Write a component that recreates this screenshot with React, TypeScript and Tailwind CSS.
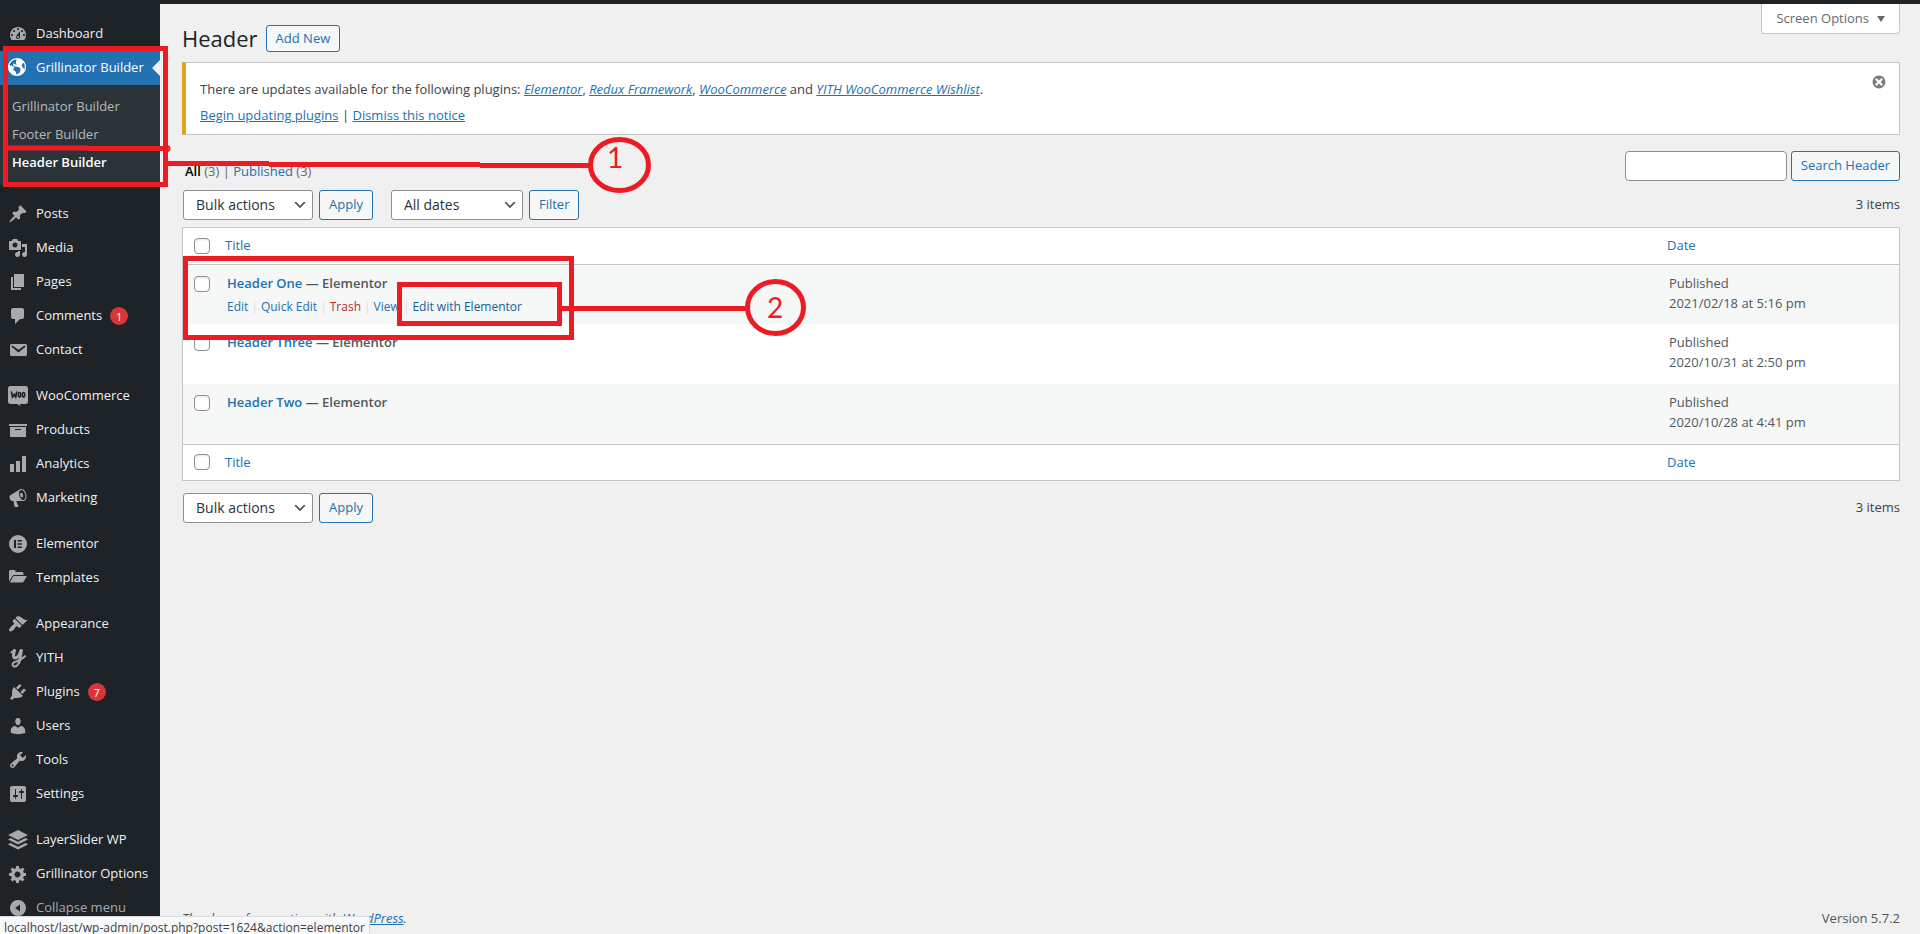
import type { ReactNode } from 'react';

const dash = {
  dashboard:
    'M3.76 16h12.48c1.1-1.37 1.76-3.11 1.76-5 0-4.42-3.58-8-8-8s-8 3.58-8 8c0 1.89.66 3.63 1.76 5zM10 4c.55 0 1 .45 1 1s-.45 1-1 1-1-.45-1-1 .45-1 1-1zM6 6c.55 0 1 .45 1 1s-.45 1-1 1-1-.45-1-1 .45-1 1-1zm8 0c.55 0 1 .45 1 1s-.45 1-1 1-1-.45-1-1 .45-1 1-1zm-5.37 5.55L12 7v6c0 1.1-.9 2-2 2s-2-.9-2-2c0-.57.24-1.08.63-1.45zM4 10c.55 0 1 .45 1 1s-.45 1-1 1-1-.45-1-1 .45-1 1-1zm12 0c.55 0 1 .45 1 1s-.45 1-1 1-1-.45-1-1 .45-1 1-1zm-5 3c0-.55-.45-1-1-1s-1 .45-1 1 .45 1 1 1 1-.45 1-1z',
  site: 'M9 0C4.03 0 0 4.03 0 9s4.03 9 9 9 9-4.03 9-9-4.03-9-9-9zm3.46 11.95c0 1.47-.8 3.3-4.06 4.7.3-4.17-2.52-3.69-3.2-5 .126-1.1.804-2.063 1.8-2.55-1.552-.266-3-.96-4.18-2 .05.47.28.904.64 1.21-.782-.295-1.458-.817-1.94-1.5.977-3.225 3.883-5.482 7.25-5.63-.84 1.38-1.5 4.13 0 5.57C7.23 7 6.26 5 5.41 5.79c-1.13 1.06.33 2.51 3.42 3.08 3.29.59 3.66 1.58 3.63 3.08zm1.34-4c-.32-1.11.62-2.23 1.69-3.14 1.356 1.955 1.67 4.45.84 6.68-.77-1.89-2.17-2.32-2.53-3.57v.03z',
  post: 'M10.44 3.02l1.82-1.82 6.36 6.35-1.83 1.82c-1.05-.68-2.48-.57-3.41.36l-.75.75c-.92.93-1.04 2.35-.35 3.41l-1.83 1.82-2.41-2.41-2.8 2.79c-.42.42-3.38 2.71-3.8 2.29s1.86-3.39 2.28-3.81l2.79-2.79L4.1 9.36l1.83-1.82c1.05.69 2.48.57 3.4-.36l.75-.75c.93-.92 1.05-2.35.36-3.41z',
  media:
    'M13 11V4c0-.55-.45-1-1-1h-1.67L9 1H5L3.67 3H2c-.55 0-1 .45-1 1v7c0 .55.45 1 1 1h10c.55 0 1-.45 1-1zM7 4.5c1.38 0 2.5 1.12 2.5 2.5S8.38 9.5 7 9.5 4.5 8.38 4.5 7 5.62 4.5 7 4.5zM14 6h5v10.5c0 1.38-1.12 2.5-2.5 2.5S14 17.88 14 16.5s1.12-2.5 2.5-2.5c.17 0 .34.02.5.05V9h-3V6zm-4 8.05V13h2v3.5c0 1.38-1.12 2.5-2.5 2.5S7 17.88 7 16.5 8.12 14 9.5 14c.17 0 .34.02.5.05z',
  page: 'M6 15V2h10v13H6zm-1 1h8v2H3V5h2v11z',
  comments:
    'M5 2h9c1.1 0 2 .9 2 2v7c0 1.1-.9 2-2 2h-2l-5 5v-5H5c-1.1 0-2-.9-2-2V4c0-1.1.9-2 2-2z',
  email:
    'M3.87 4h13.25C18.37 4 19 4.59 19 5.79v8.42c0 1.19-.63 1.79-1.88 1.79H3.87c-1.25 0-1.88-.6-1.88-1.79V5.79c0-1.2.63-1.79 1.88-1.79zm6.62 8.6l6.74-5.53c.24-.2.43-.66.13-1.07-.29-.41-.82-.42-1.17-.17l-5.7 3.86L4.8 5.83c-.35-.25-.88-.24-1.17.17-.3.41-.11.87.13 1.07z',
  archive: 'M19 4v2H1V4h18zM2 7h16v10H2V7zm11 3V9H7v1h6z',
  chart: 'M18 18V2h-4v16h4zm-6 0V7H8v11h4zm-6 0v-8H2v8h4z',
  megaphone:
    'M18.15 5.94c.46 1.62.38 3.22-.02 4.48-.42 1.28-1.26 2.18-2.3 2.48-.16.06-.26.06-.4.06-.06.02-.12.02-.18.02-.06.02-.14.02-.22.02h-6.8l2.22 5.5c.02.14-.06.26-.14.34-.08.1-.24.16-.34.16H6.95c-.1 0-.26-.06-.34-.16-.08-.08-.16-.2-.14-.34l-1-5.5H4.25l-.02-.02c-.5.06-1.08-.18-1.54-.62s-.88-1.08-1.06-1.88c-.24-.8-.2-1.56-.02-2.2.18-.62.58-1.08 1.06-1.3l.02-.02 9-5.4c.1-.06.18-.1.24-.16.06-.04.14-.08.24-.12.16-.08.28-.12.5-.18 1.04-.3 2.24.1 3.22.98s1.84 2.24 2.26 3.86zm-2.58 5.98h-.02c.4-.1.74-.34 1.04-.7.58-.7.86-1.76.86-3.04 0-.64-.1-1.3-.28-1.98-.34-1.36-1.02-2.5-1.78-3.24s-1.68-1.1-2.46-.88c-.82.22-1.4.96-1.7 2-.32 1.04-.28 2.36.06 3.72.38 1.36 1 2.5 1.8 3.24.78.74 1.62 1.1 2.48.88zm-2.54-7.08c.22-.04.42-.02.62.04.38.16.76.48 1.02 1s.42 1.2.42 1.78c0 .3-.04.56-.12.8-.18.48-.44.84-.86.94-.34.1-.8-.06-1.14-.4s-.64-.86-.78-1.5c-.18-.62-.12-1.24.02-1.72s.48-.84.82-.94z',
  elementor:
    'M10 1a9 9 0 1 0 0 18 9 9 0 0 0 0-18zM6 6h2v8H6V6zm3.500 0H14v1.600H9.500V6zm0 3.200H14v1.600H9.500V9.200zm0 3.200H14V14H9.500v-1.600z',
  folder:
    'M1 3.500C1 2.700 1.700 2 2.500 2H6c.8 0 1.300.5 1.500 1.200L7.800 4H14c.8 0 1.500.7 1.500 1.500V7H6.500c-1 0-1.900.6-2.400 1.500L1 13.500V3.500zM6.300 8H19l-3.400 5.700c-.3.500-.7.800-1.300.8H1.800l3-5.600c.3-.6.900-.9 1.500-.9z',
  appearance:
    'M14.48 11.06L7.41 3.99l1.5-1.5c.5-.56 2.3-.47 3.51.32 1.21.8 1.43 1.28 2.91 2.1 1.18.64 2.45 1.26 4.45.85zm-.71.71L6.7 4.7 4.93 6.47c-.39.39-.39 1.02 0 1.41l1.06 1.06c.39.39.39 1.03 0 1.42-.6.6-1.43 1.11-2.21 1.69-.35.26-.7.53-1.01.84C1.43 14.23.4 16.08 1.4 17.07c.99 1 2.84-.03 4.18-1.36.31-.31.58-.66.85-1.02.57-.78 1.08-1.61 1.69-2.21.39-.39 1.02-.39 1.41 0l1.06 1.06c.39.39 1.02.39 1.41 0z',
  plugins:
    'M13.11 4.36L9.87 7.6 8 5.73l3.24-3.24c.35-.34 1.05-.2 1.56.32.52.51.66 1.21.31 1.55zm-8 1.77l.91-1.12 9.01 9.01-1.19.84c-.71.71-2.63 1.16-3.82 1.16H6.14L4.9 17.26c-.59.59-1.54.59-2.12 0-.59-.58-.59-1.53 0-2.12l1.24-1.24v-3.88c0-1.13.4-3.19 1.09-3.89zm7.26 3.97l3.24-3.24c.34-.35 1.04-.21 1.55.31.52.51.66 1.21.31 1.55l-3.24 3.25z',
  users:
    'M10 9.25c-2.27 0-2.73-3.44-2.73-3.44C7 4.02 7.82 2 9.97 2c2.16 0 2.98 2.02 2.71 3.81 0 0-.41 3.44-2.68 3.44zm0 2.57L12.72 10c2.39 0 4.52 2.33 4.52 4.53v2.49s-3.65 1.13-7.24 1.13c-3.65 0-7.24-1.13-7.24-1.13v-2.49c0-2.25 1.94-4.48 4.47-4.48z',
  tools:
    'M16.68 9.77c-1.34 1.34-3.3 1.67-4.95.99l-5.41 6.52c-.99.99-2.59.99-3.58 0s-.99-2.59 0-3.57l6.52-5.42c-.68-1.65-.35-3.61.99-4.95 1.28-1.28 3.12-1.62 4.72-1.06l-2.89 2.89 2.82 2.82 2.86-2.87c.53 1.58.18 3.39-1.08 4.65zM3.81 16.21c.4.39 1.04.39 1.43 0 .4-.4.4-1.04 0-1.43-.39-.4-1.03-.4-1.43 0-.39.39-.39 1.03 0 1.43z',
  settings:
    'M18 16V4c0-1.1-.9-2-2-2H4c-1.1 0-2 .9-2 2v12c0 1.1.9 2 2 2h12c1.1 0 2-.9 2-2zM8 11h1c.55 0 1 .45 1 1s-.45 1-1 1H8v1.5c0 .28-.22.5-.5.5s-.5-.22-.5-.5V13H6c-.55 0-1-.45-1-1s.45-1 1-1h1V5.5c0-.28.22-.5.5-.5s.5.22.5.5V11zm5-2h-1c-.55 0-1-.45-1-1s.45-1 1-1h1V5.5c0-.28.22-.5.5-.5s.5.22.5.5V7h1c.55 0 1 .45 1 1s-.45 1-1 1h-1v5.5c0 .28-.22.5-.5.5s-.5-.22-.5-.5V9z',
  layers:
    'M10 0l10 5-10 5L0 5l10-5zM2.500 8L10 11.800 17.500 8 20 9.500l-10 5-10-5L2.500 8zm0 5L10 16.800l7.500-3.800L20 14.500l-10 5-10-5L2.500 13z',
  generic:
    'M18 12h-2.18c-.17.7-.44 1.35-.81 1.93l1.54 1.54-2.1 2.1-1.54-1.54c-.58.36-1.23.63-1.91.79V19H8v-2.18c-.68-.16-1.33-.43-1.91-.79l-1.54 1.54-2.12-2.12 1.54-1.54c-.36-.58-.63-1.23-.79-1.91H1V9.03h2.17c.16-.7.44-1.35.8-1.94L2.43 5.55l2.1-2.1 1.54 1.54c.58-.37 1.24-.64 1.93-.81V2h3v2.18c.68.16 1.33.43 1.91.79l1.54-1.54 2.12 2.12-1.54 1.54c.36.59.64 1.24.8 1.94H18V12zm-8.5 1.5c1.66 0 3-1.34 3-3s-1.34-3-3-3-3 1.34-3 3 1.34 3 3 3z',
  collapse: 'M10 2a8 8 0 1 0 0 16 8 8 0 0 0 0-16zm2 4.500v7L7 10l5-3.500z',
  dismiss:
    'M10 2c4.42 0 8 3.58 8 8s-3.580 8-8 8-8-3.580-8-8 3.580-8 8-8zm5 11l-3-3 3-3-2-2-3 3-3-3-2 2 3 3-3 3 2 2 3-3 3 3z',
};

type IconName = keyof typeof dash;

function DashIcon({ name, className = 'size-5' }: { name: IconName; className?: string }) {
  return (
    <svg
      viewBox="0 0 20 20"
      className={`shrink-0 ${className}`}
      fill="currentColor"
      fillRule="evenodd"
      aria-hidden="true"
    >
      <path d={dash[name]} />
    </svg>
  );
}

function WooIcon() {
  return (
    <svg viewBox="0 0 20 20" className="size-5" aria-hidden="true">
      <path
        d="M2.500 0h15A2.500 2.500 0 0 1 20 2.500v13a2.500 2.500 0 0 1-2.500 2.500H12l.5 2-3.500-2H2.500A2.500 2.500 0 0 1 0 15.500v-13A2.500 2.500 0 0 1 2.500 0z"
        fill="currentColor"
      />
      <g fill="none" stroke="#1d2327" strokeWidth="1.600" strokeLinecap="round" strokeLinejoin="round">
        <path d="M3.500 6l1 5.500L6.300 8l1.400 3.500L8.700 6" />
        <ellipse cx="11.500" cy="8.700" rx="1.200" ry="2.200" />
        <ellipse cx="15.500" cy="8.700" rx="1.200" ry="2.200" />
      </g>
    </svg>
  );
}

function YithIcon() {
  return (
    <svg viewBox="0 0 20 20" className="size-5" aria-hidden="true">
      <g fill="none" stroke="currentColor" strokeLinecap="round" strokeLinejoin="round">
        <path strokeWidth="3" d="M6.500 2.500C5.500 6 4.500 10 7.500 10c2.500 0 4-3 5.500-7.500" />
        <path strokeWidth="2.600" d="M13.500 2.500c-.5 4-1 8-2.500 12" />
        <path strokeWidth="2" d="M11 14c-1 3-3 4.800-5 4.500-2-.4-1.800-3.200.2-4.300 3-1.500 7-2 10.800-6M3.500 4.500L6 2.200" />
      </g>
    </svg>
  );
}

type Item = { label: string; icon: ReactNode; badge?: string };

const icon = (name: IconName) => <DashIcon name={name} />;

const groups: Item[][] = [
  [
    { label: 'Posts', icon: icon('post') },
    { label: 'Media', icon: icon('media') },
    { label: 'Pages', icon: icon('page') },
    { label: 'Comments', icon: icon('comments'), badge: '1' },
    { label: 'Contact', icon: icon('email') },
  ],
  [
    { label: 'WooCommerce', icon: <WooIcon /> },
    { label: 'Products', icon: icon('archive') },
    { label: 'Analytics', icon: icon('chart') },
    { label: 'Marketing', icon: icon('megaphone') },
  ],
  [
    { label: 'Elementor', icon: icon('elementor') },
    { label: 'Templates', icon: icon('folder') },
  ],
  [
    { label: 'Appearance', icon: icon('appearance') },
    { label: 'YITH', icon: <YithIcon /> },
    { label: 'Plugins', icon: icon('plugins'), badge: '7' },
    { label: 'Users', icon: icon('users') },
    { label: 'Tools', icon: icon('tools') },
    { label: 'Settings', icon: icon('settings') },
  ],
  [
    { label: 'LayerSlider WP', icon: icon('layers') },
    { label: 'Grillinator Options', icon: icon('generic') },
  ],
];

const rows = [
  { title: 'Header One', date: '2021/02/18 at 5:16 pm', actions: true },
  { title: 'Header Three', date: '2020/10/31 at 2:50 pm' },
  { title: 'Header Two', date: '2020/10/28 at 4:41 pm' },
];

function MenuItem({ item }: { item: Item }) {
  return (
    <li>
      <a href="#" className="flex h-[34px] items-center gap-2 pl-2 text-[#f0f0f1]">
        <span className="text-[#a7aaad]">{item.icon}</span>
        <span className="whitespace-nowrap">{item.label}</span>
        {item.badge && (
          <span className="flex size-[18px] items-center justify-center rounded-full bg-[#d63638] text-[11px] leading-none text-white">
            {item.badge}
          </span>
        )}
      </a>
    </li>
  );
}

function Sidebar() {
  return (
    <nav className="w-40 shrink-0 bg-[#1d2327] pt-[13px]" aria-label="Main menu">
      <ul>
        <MenuItem item={{ label: 'Dashboard', icon: icon('dashboard') }} />
        <li>
          <a href="#" className="flex h-[34px] items-center gap-2 bg-[#2271b1] pl-2 text-white">
            <DashIcon name="site" />
            <span className="whitespace-nowrap">Grillinator Builder</span>
            <span className="ml-auto border-y-8 border-r-8 border-y-transparent border-r-[#f0f0f1]" />
          </a>
          <ul className="bg-[#2c3338] py-2 text-[#b4b9be]">
            <li>
              <a href="#" className="flex h-7 items-center px-3">Grillinator Builder</a>
            </li>
            <li>
              <a href="#" className="flex h-7 items-center px-3">Footer Builder</a>
            </li>
            <li>
              <a href="#" className="flex h-7 items-center px-3 font-semibold text-white">Header Builder</a>
            </li>
          </ul>
        </li>
      </ul>
      {groups.map((group) => (
        <ul key={group[0].label} className="mt-3">
          {group.map((item) => (
            <MenuItem key={item.label} item={item} />
          ))}
        </ul>
      ))}
      <button type="button" className="flex h-[34px] w-full items-center gap-2 pl-2 text-[#a7aaad]">
        <DashIcon name="collapse" />
        Collapse menu
      </button>
    </nav>
  );
}

function Button({ children, className = 'h-[30px]' }: { children: ReactNode; className?: string }) {
  return (
    <button
      type="button"
      className={`rounded-[3px] border border-[#2271b1] bg-[#f6f7f7] px-[9px] text-[#2271b1] ${className}`}
    >
      {children}
    </button>
  );
}

function Select({ label, value, className }: { label: string; value: string; className: string }) {
  return (
    <span className="relative flex">
      <select
        aria-label={label}
        className={`h-[30px] appearance-none rounded-[3px] border border-[#8c8f94] bg-white pr-6 pl-3 text-sm text-[#2c3338] ${className}`}
      >
        <option>{value}</option>
      </select>
      <svg viewBox="0 0 20 20" className="pointer-events-none absolute top-[7px] right-[5px] size-4" aria-hidden="true">
        <path d="M5 6l5 5 5-5 2 1-7 7-7-7 2-1z" fill="#555" />
      </svg>
    </span>
  );
}

function Checkbox({ label }: { label: string }) {
  return (
    <input
      type="checkbox"
      aria-label={label}
      className="block size-4 appearance-none rounded-[4px] border border-[#8c8f94] bg-white shadow-[inset_0_1px_2px_rgba(0,0,0,0.1)]"
    />
  );
}

function PluginLink({ children }: { children: ReactNode }) {
  return (
    <a href="#" className="font-medium text-[#2271b1] italic underline">
      {children}
    </a>
  );
}

function UpdateNotice() {
  return (
    <div className="flex items-start justify-between border border-l-4 border-[#c3c4c7] border-l-[#dba617] bg-white pr-3 pl-[14px]">
      <div className="pt-[13px] pb-[6px] leading-[26px]">
        <p>
          There are updates available for the following plugins: <PluginLink>Elementor</PluginLink>,{' '}
          <PluginLink>Redux Framework</PluginLink>, <PluginLink>WooCommerce</PluginLink> and{' '}
          <PluginLink>YITH WooCommerce Wishlist</PluginLink>.
        </p>
        <p>
          <a href="#" className="text-[#2271b1] underline">Begin updating plugins</a> |{' '}
          <a href="#" className="text-[#2271b1] underline">Dismiss this notice</a>
        </p>
      </div>
      <button type="button" aria-label="Dismiss" className="pt-[11px] text-[#787c82]">
        <DashIcon name="dismiss" className="size-4" />
      </button>
    </div>
  );
}

function HeadingCells({ position }: { position: string }) {
  return (
    <tr className="h-9 text-left text-[#2271b1]">
      <td className="w-[42px] pl-[11px]">
        <Checkbox label={`Select all (${position})`} />
      </td>
      <th className="font-normal"><a href="#">Title</a></th>
      <th className="w-[232px] font-normal"><a href="#">Date</a></th>
    </tr>
  );
}

function Separator() {
  return <span className="px-[3px] text-[#dcdcde]">|</span>;
}

function RowActions() {
  return (
    <div className="flex items-center text-xs leading-7 whitespace-nowrap text-[#2271b1]">
      <a href="#">Edit</a>
      <Separator />
      <a href="#">Quick Edit</a>
      <Separator />
      <a href="#" className="text-[#b32d2e]">Trash</a>
      <Separator />
      <a href="#">View</a>
      <Separator />
      <a href="#" className="text-[#135e96]">Edit with Elementor</a>
    </div>
  );
}

function PostsTable() {
  return (
    <div className="border border-[#c3c4c7] bg-white">
      <table className="w-full border-collapse">
        <thead className="border-b border-[#c3c4c7]">
          <HeadingCells position="top" />
        </thead>
        <tbody className="text-[#50575e]">
          {rows.map((row) => (
            <tr key={row.title} className="h-[60px] align-top odd:bg-[#f6f7f7]">
              <td className="pt-[11px] pl-[11px]">
                <Checkbox label={`Select ${row.title}`} />
              </td>
              <td className="pt-2 pl-[2px]">
                <div className="leading-5 font-semibold">
                  <a href="#" className="text-[#2271b1]">{row.title}</a> — Elementor
                </div>
                {row.actions && <RowActions />}
              </td>
              <td className="pt-2 pl-[2px] leading-5">
                Published
                <br />
                {row.date}
              </td>
            </tr>
          ))}
        </tbody>
        <tfoot className="border-t border-[#c3c4c7]">
          <HeadingCells position="bottom" />
        </tfoot>
      </table>
    </div>
  );
}

// Red tutorial marks drawn on top of the screen
function Callouts() {
  return (
    <svg
      width="820"
      height="350"
      className="pointer-events-none absolute top-0 left-0"
      fill="none"
      stroke="#ed1c24"
      strokeWidth="5"
      aria-hidden="true"
    >
      <rect x="5.5" y="48.5" width="160" height="136" />
      <path d="M8 148h80M87 148.500h80" />
      <circle cx="167" cy="148.500" r="1" />
      <path d="M163 163.500h106M269 164.500h211M480 165.500h109" />
      <ellipse cx="619.500" cy="165" rx="29" ry="25.500" />
      <rect x="185.500" y="258.500" width="386" height="79" />
      <rect x="399.500" y="284.500" width="160" height="39" />
      <path d="M562 308.500h184" />
      <ellipse cx="775.500" cy="307.500" rx="28" ry="26" />
      <g className="font-['Lato',sans-serif] text-[28px]" fill="#ed1c24" stroke="none" textAnchor="middle">
        <text x="615" y="168">1</text>
        <text x="775" y="318">2</text>
      </g>
    </svg>
  );
}

export default function App() {
  return (
    <div className="relative flex min-h-screen flex-col bg-[#f0f0f1] font-['Open_Sans',sans-serif] text-[13px] text-[#3c434a]">
      <div className="h-1 bg-[#1d2327]" />
      <div className="flex flex-1">
        <Sidebar />
        <div className="flex min-w-0 flex-1 flex-col pr-5 pl-[22px]">
          <header className="flex items-start justify-between">
            <div className="flex items-center gap-2 pt-[21px] pb-[10px]">
              <h1 className="text-[22px] leading-[27px] text-[#1d2327]">Header</h1>
              <Button className="h-[27px] font-medium">Add New</Button>
            </div>
            <button
              type="button"
              className="flex h-[30px] items-center gap-2 rounded-b-[4px] border border-t-0 border-[#c3c4c7] bg-white px-[14px] text-[#646970]"
            >
              Screen Options
              <span className="border-x-4 border-t-[6px] border-x-transparent border-t-[#646970]" />
            </button>
          </header>

          <UpdateNotice />

          <main>
            <div className="flex items-start justify-between pt-4">
              <p className="pt-3 pl-[3px] leading-4 text-[#646970]">
                <a href="#" className="font-semibold text-black">All</a> (3) |{' '}
                <a href="#" className="text-[#2271b1]">Published</a> (3)
              </p>
              <div className="flex gap-1">
                <input
                  type="search"
                  aria-label="Search Header"
                  className="h-[30px] w-[162px] rounded-[4px] border border-[#8c8f94] bg-white px-2"
                />
                <Button>Search Header</Button>
              </div>
            </div>

            <div className="flex items-center gap-[6px] pt-[9px] pb-[7px] pl-px">
              <Select label="Bulk action" value="Bulk actions" className="w-[130px]" />
              <Button>Apply</Button>
              <span className="w-[6px]" />
              <Select label="Filter by date" value="All dates" className="w-[132px]" />
              <Button>Filter</Button>
              <span className="ml-auto">3 items</span>
            </div>

            <PostsTable />

            <div className="flex items-center gap-[6px] pt-3 pl-px">
              <Select label="Bulk action (bottom)" value="Bulk actions" className="w-[130px]" />
              <Button>Apply</Button>
              <span className="ml-auto">3 items</span>
            </div>
          </main>

          <footer className="mt-auto flex justify-between pb-[6px] leading-5 text-[#50575e]">
            <p className="italic">
              Thank you for creating with <a href="#" className="text-[#2271b1] underline">WordPress</a>.
            </p>
            <p>Version 5.7.2</p>
          </footer>
        </div>
      </div>

      <div className="absolute bottom-0 left-0 h-[18px] rounded-tr-[2px] border-t border-r border-[#dadce0] bg-[#f8f9fa] px-1 text-xs leading-[22px] whitespace-nowrap text-[#3c4043]">
        localhost/last/wp-admin/post.php?post=1624&amp;action=elementor
      </div>
      <Callouts />
    </div>
  );
}
